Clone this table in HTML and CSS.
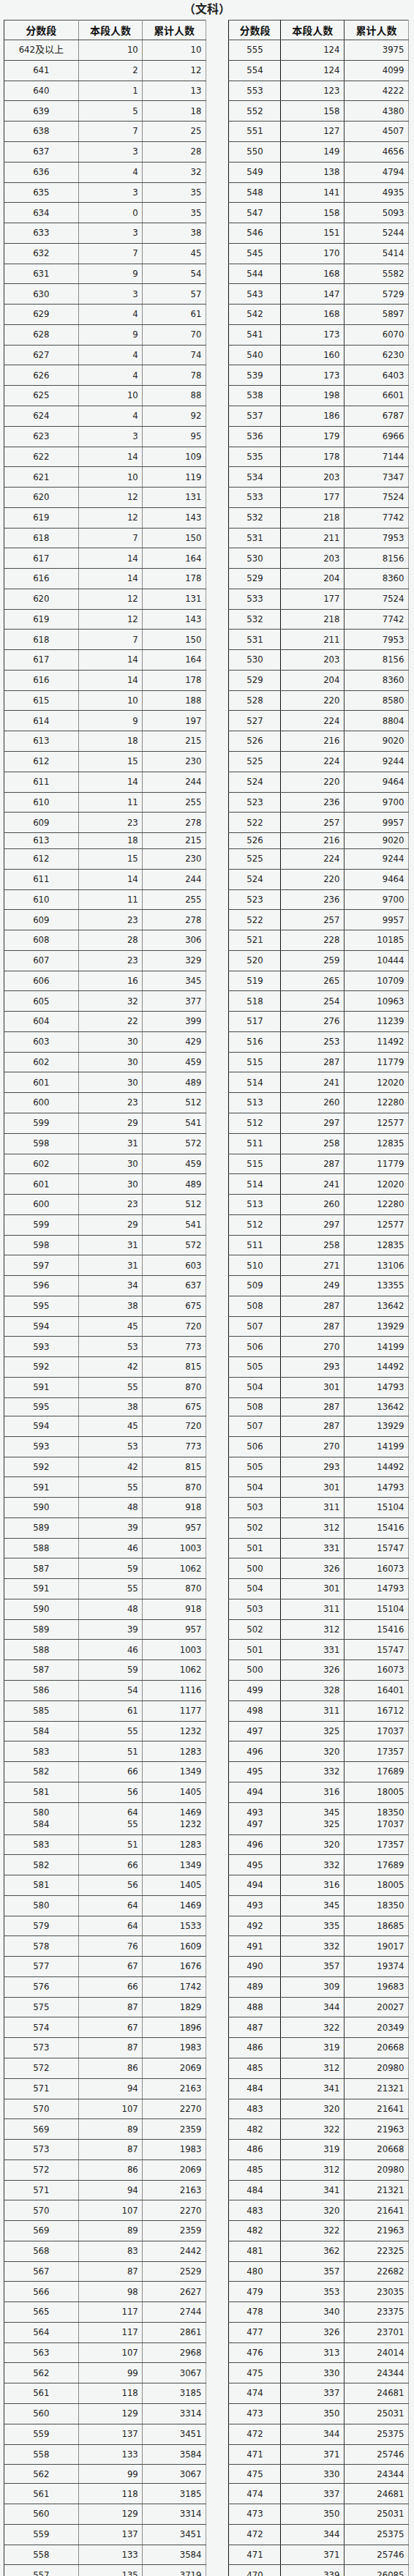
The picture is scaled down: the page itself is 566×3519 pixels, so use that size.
FILE: index.html
```html
<!DOCTYPE html>
<html lang="zh-CN">
<head>
<meta charset="utf-8">
<title>分数段统计（文科）</title>
<link rel="stylesheet" href="styles.css">
</head>
<body>
<div class="title">（文科）</div>
<div class="tables">
<table class="tbl left">
<colgroup><col class="l1"><col class="l2"><col class="l3"></colgroup>
<thead><tr><th>分数段</th><th>本段人数</th><th>累计人数</th></tr></thead>
<tbody>
<tr><td>642及以上</td><td>10</td><td>10</td></tr>
<tr><td>641</td><td>2</td><td>12</td></tr>
<tr><td>640</td><td>1</td><td>13</td></tr>
<tr><td>639</td><td>5</td><td>18</td></tr>
<tr><td>638</td><td>7</td><td>25</td></tr>
<tr><td>637</td><td>3</td><td>28</td></tr>
<tr><td>636</td><td>4</td><td>32</td></tr>
<tr><td>635</td><td>3</td><td>35</td></tr>
<tr><td>634</td><td>0</td><td>35</td></tr>
<tr><td>633</td><td>3</td><td>38</td></tr>
<tr><td>632</td><td>7</td><td>45</td></tr>
<tr><td>631</td><td>9</td><td>54</td></tr>
<tr><td>630</td><td>3</td><td>57</td></tr>
<tr><td>629</td><td>4</td><td>61</td></tr>
<tr><td>628</td><td>9</td><td>70</td></tr>
<tr><td>627</td><td>4</td><td>74</td></tr>
<tr><td>626</td><td>4</td><td>78</td></tr>
<tr><td>625</td><td>10</td><td>88</td></tr>
<tr><td>624</td><td>4</td><td>92</td></tr>
<tr><td>623</td><td>3</td><td>95</td></tr>
<tr><td>622</td><td>14</td><td>109</td></tr>
<tr><td>621</td><td>10</td><td>119</td></tr>
<tr><td>620</td><td>12</td><td>131</td></tr>
<tr><td>619</td><td>12</td><td>143</td></tr>
<tr><td>618</td><td>7</td><td>150</td></tr>
<tr><td>617</td><td>14</td><td>164</td></tr>
<tr><td>616</td><td>14</td><td>178</td></tr>
<tr><td>620</td><td>12</td><td>131</td></tr>
<tr><td>619</td><td>12</td><td>143</td></tr>
<tr><td>618</td><td>7</td><td>150</td></tr>
<tr><td>617</td><td>14</td><td>164</td></tr>
<tr><td>616</td><td>14</td><td>178</td></tr>
<tr><td>615</td><td>10</td><td>188</td></tr>
<tr><td>614</td><td>9</td><td>197</td></tr>
<tr><td>613</td><td>18</td><td>215</td></tr>
<tr><td>612</td><td>15</td><td>230</td></tr>
<tr><td>611</td><td>14</td><td>244</td></tr>
<tr><td>610</td><td>11</td><td>255</td></tr>
<tr><td>609</td><td>23</td><td>278</td></tr>
<tr class="short1"><td>613</td><td>18</td><td>215</td></tr>
<tr><td>612</td><td>15</td><td>230</td></tr>
<tr><td>611</td><td>14</td><td>244</td></tr>
<tr><td>610</td><td>11</td><td>255</td></tr>
<tr><td>609</td><td>23</td><td>278</td></tr>
<tr><td>608</td><td>28</td><td>306</td></tr>
<tr><td>607</td><td>23</td><td>329</td></tr>
<tr><td>606</td><td>16</td><td>345</td></tr>
<tr><td>605</td><td>32</td><td>377</td></tr>
<tr><td>604</td><td>22</td><td>399</td></tr>
<tr><td>603</td><td>30</td><td>429</td></tr>
<tr><td>602</td><td>30</td><td>459</td></tr>
<tr><td>601</td><td>30</td><td>489</td></tr>
<tr><td>600</td><td>23</td><td>512</td></tr>
<tr><td>599</td><td>29</td><td>541</td></tr>
<tr><td>598</td><td>31</td><td>572</td></tr>
<tr><td>602</td><td>30</td><td>459</td></tr>
<tr><td>601</td><td>30</td><td>489</td></tr>
<tr><td>600</td><td>23</td><td>512</td></tr>
<tr><td>599</td><td>29</td><td>541</td></tr>
<tr><td>598</td><td>31</td><td>572</td></tr>
<tr><td>597</td><td>31</td><td>603</td></tr>
<tr><td>596</td><td>34</td><td>637</td></tr>
<tr><td>595</td><td>38</td><td>675</td></tr>
<tr><td>594</td><td>45</td><td>720</td></tr>
<tr><td>593</td><td>53</td><td>773</td></tr>
<tr><td>592</td><td>42</td><td>815</td></tr>
<tr><td>591</td><td>55</td><td>870</td></tr>
<tr class="short2"><td>595</td><td>38</td><td>675</td></tr>
<tr><td>594</td><td>45</td><td>720</td></tr>
<tr><td>593</td><td>53</td><td>773</td></tr>
<tr><td>592</td><td>42</td><td>815</td></tr>
<tr><td>591</td><td>55</td><td>870</td></tr>
<tr><td>590</td><td>48</td><td>918</td></tr>
<tr><td>589</td><td>39</td><td>957</td></tr>
<tr><td>588</td><td>46</td><td>1003</td></tr>
<tr><td>587</td><td>59</td><td>1062</td></tr>
<tr><td>591</td><td>55</td><td>870</td></tr>
<tr><td>590</td><td>48</td><td>918</td></tr>
<tr><td>589</td><td>39</td><td>957</td></tr>
<tr><td>588</td><td>46</td><td>1003</td></tr>
<tr><td>587</td><td>59</td><td>1062</td></tr>
<tr><td>586</td><td>54</td><td>1116</td></tr>
<tr><td>585</td><td>61</td><td>1177</td></tr>
<tr><td>584</td><td>55</td><td>1232</td></tr>
<tr><td>583</td><td>51</td><td>1283</td></tr>
<tr><td>582</td><td>66</td><td>1349</td></tr>
<tr><td>581</td><td>56</td><td>1405</td></tr>
<tr class="double"><td>580<br>584</td><td>64<br>55</td><td>1469<br>1232</td></tr>
<tr><td>583</td><td>51</td><td>1283</td></tr>
<tr><td>582</td><td>66</td><td>1349</td></tr>
<tr><td>581</td><td>56</td><td>1405</td></tr>
<tr><td>580</td><td>64</td><td>1469</td></tr>
<tr><td>579</td><td>64</td><td>1533</td></tr>
<tr><td>578</td><td>76</td><td>1609</td></tr>
<tr><td>577</td><td>67</td><td>1676</td></tr>
<tr><td>576</td><td>66</td><td>1742</td></tr>
<tr><td>575</td><td>87</td><td>1829</td></tr>
<tr><td>574</td><td>67</td><td>1896</td></tr>
<tr><td>573</td><td>87</td><td>1983</td></tr>
<tr><td>572</td><td>86</td><td>2069</td></tr>
<tr><td>571</td><td>94</td><td>2163</td></tr>
<tr><td>570</td><td>107</td><td>2270</td></tr>
<tr><td>569</td><td>89</td><td>2359</td></tr>
<tr><td>573</td><td>87</td><td>1983</td></tr>
<tr><td>572</td><td>86</td><td>2069</td></tr>
<tr><td>571</td><td>94</td><td>2163</td></tr>
<tr><td>570</td><td>107</td><td>2270</td></tr>
<tr><td>569</td><td>89</td><td>2359</td></tr>
<tr><td>568</td><td>83</td><td>2442</td></tr>
<tr><td>567</td><td>87</td><td>2529</td></tr>
<tr><td>566</td><td>98</td><td>2627</td></tr>
<tr><td>565</td><td>117</td><td>2744</td></tr>
<tr><td>564</td><td>117</td><td>2861</td></tr>
<tr><td>563</td><td>107</td><td>2968</td></tr>
<tr><td>562</td><td>99</td><td>3067</td></tr>
<tr><td>561</td><td>118</td><td>3185</td></tr>
<tr><td>560</td><td>129</td><td>3314</td></tr>
<tr><td>559</td><td>137</td><td>3451</td></tr>
<tr><td>558</td><td>133</td><td>3584</td></tr>
<tr class="short3"><td>562</td><td>99</td><td>3067</td></tr>
<tr><td>561</td><td>118</td><td>3185</td></tr>
<tr><td>560</td><td>129</td><td>3314</td></tr>
<tr><td>559</td><td>137</td><td>3451</td></tr>
<tr><td>558</td><td>133</td><td>3584</td></tr>
<tr><td>557</td><td>135</td><td>3719</td></tr>
</tbody>
</table>
<table class="tbl right">
<colgroup><col class="r1"><col class="r2"><col class="r3"></colgroup>
<thead><tr><th>分数段</th><th>本段人数</th><th>累计人数</th></tr></thead>
<tbody>
<tr><td>555</td><td>124</td><td>3975</td></tr>
<tr><td>554</td><td>124</td><td>4099</td></tr>
<tr><td>553</td><td>123</td><td>4222</td></tr>
<tr><td>552</td><td>158</td><td>4380</td></tr>
<tr><td>551</td><td>127</td><td>4507</td></tr>
<tr><td>550</td><td>149</td><td>4656</td></tr>
<tr><td>549</td><td>138</td><td>4794</td></tr>
<tr><td>548</td><td>141</td><td>4935</td></tr>
<tr><td>547</td><td>158</td><td>5093</td></tr>
<tr><td>546</td><td>151</td><td>5244</td></tr>
<tr><td>545</td><td>170</td><td>5414</td></tr>
<tr><td>544</td><td>168</td><td>5582</td></tr>
<tr><td>543</td><td>147</td><td>5729</td></tr>
<tr><td>542</td><td>168</td><td>5897</td></tr>
<tr><td>541</td><td>173</td><td>6070</td></tr>
<tr><td>540</td><td>160</td><td>6230</td></tr>
<tr><td>539</td><td>173</td><td>6403</td></tr>
<tr><td>538</td><td>198</td><td>6601</td></tr>
<tr><td>537</td><td>186</td><td>6787</td></tr>
<tr><td>536</td><td>179</td><td>6966</td></tr>
<tr><td>535</td><td>178</td><td>7144</td></tr>
<tr><td>534</td><td>203</td><td>7347</td></tr>
<tr><td>533</td><td>177</td><td>7524</td></tr>
<tr><td>532</td><td>218</td><td>7742</td></tr>
<tr><td>531</td><td>211</td><td>7953</td></tr>
<tr><td>530</td><td>203</td><td>8156</td></tr>
<tr><td>529</td><td>204</td><td>8360</td></tr>
<tr><td>533</td><td>177</td><td>7524</td></tr>
<tr><td>532</td><td>218</td><td>7742</td></tr>
<tr><td>531</td><td>211</td><td>7953</td></tr>
<tr><td>530</td><td>203</td><td>8156</td></tr>
<tr><td>529</td><td>204</td><td>8360</td></tr>
<tr><td>528</td><td>220</td><td>8580</td></tr>
<tr><td>527</td><td>224</td><td>8804</td></tr>
<tr><td>526</td><td>216</td><td>9020</td></tr>
<tr><td>525</td><td>224</td><td>9244</td></tr>
<tr><td>524</td><td>220</td><td>9464</td></tr>
<tr><td>523</td><td>236</td><td>9700</td></tr>
<tr><td>522</td><td>257</td><td>9957</td></tr>
<tr class="short1"><td>526</td><td>216</td><td>9020</td></tr>
<tr><td>525</td><td>224</td><td>9244</td></tr>
<tr><td>524</td><td>220</td><td>9464</td></tr>
<tr><td>523</td><td>236</td><td>9700</td></tr>
<tr><td>522</td><td>257</td><td>9957</td></tr>
<tr><td>521</td><td>228</td><td>10185</td></tr>
<tr><td>520</td><td>259</td><td>10444</td></tr>
<tr><td>519</td><td>265</td><td>10709</td></tr>
<tr><td>518</td><td>254</td><td>10963</td></tr>
<tr><td>517</td><td>276</td><td>11239</td></tr>
<tr><td>516</td><td>253</td><td>11492</td></tr>
<tr><td>515</td><td>287</td><td>11779</td></tr>
<tr><td>514</td><td>241</td><td>12020</td></tr>
<tr><td>513</td><td>260</td><td>12280</td></tr>
<tr><td>512</td><td>297</td><td>12577</td></tr>
<tr><td>511</td><td>258</td><td>12835</td></tr>
<tr><td>515</td><td>287</td><td>11779</td></tr>
<tr><td>514</td><td>241</td><td>12020</td></tr>
<tr><td>513</td><td>260</td><td>12280</td></tr>
<tr><td>512</td><td>297</td><td>12577</td></tr>
<tr><td>511</td><td>258</td><td>12835</td></tr>
<tr><td>510</td><td>271</td><td>13106</td></tr>
<tr><td>509</td><td>249</td><td>13355</td></tr>
<tr><td>508</td><td>287</td><td>13642</td></tr>
<tr><td>507</td><td>287</td><td>13929</td></tr>
<tr><td>506</td><td>270</td><td>14199</td></tr>
<tr><td>505</td><td>293</td><td>14492</td></tr>
<tr><td>504</td><td>301</td><td>14793</td></tr>
<tr class="short2"><td>508</td><td>287</td><td>13642</td></tr>
<tr><td>507</td><td>287</td><td>13929</td></tr>
<tr><td>506</td><td>270</td><td>14199</td></tr>
<tr><td>505</td><td>293</td><td>14492</td></tr>
<tr><td>504</td><td>301</td><td>14793</td></tr>
<tr><td>503</td><td>311</td><td>15104</td></tr>
<tr><td>502</td><td>312</td><td>15416</td></tr>
<tr><td>501</td><td>331</td><td>15747</td></tr>
<tr><td>500</td><td>326</td><td>16073</td></tr>
<tr><td>504</td><td>301</td><td>14793</td></tr>
<tr><td>503</td><td>311</td><td>15104</td></tr>
<tr><td>502</td><td>312</td><td>15416</td></tr>
<tr><td>501</td><td>331</td><td>15747</td></tr>
<tr><td>500</td><td>326</td><td>16073</td></tr>
<tr><td>499</td><td>328</td><td>16401</td></tr>
<tr><td>498</td><td>311</td><td>16712</td></tr>
<tr><td>497</td><td>325</td><td>17037</td></tr>
<tr><td>496</td><td>320</td><td>17357</td></tr>
<tr><td>495</td><td>332</td><td>17689</td></tr>
<tr><td>494</td><td>316</td><td>18005</td></tr>
<tr class="double"><td>493<br>497</td><td>345<br>325</td><td>18350<br>17037</td></tr>
<tr><td>496</td><td>320</td><td>17357</td></tr>
<tr><td>495</td><td>332</td><td>17689</td></tr>
<tr><td>494</td><td>316</td><td>18005</td></tr>
<tr><td>493</td><td>345</td><td>18350</td></tr>
<tr><td>492</td><td>335</td><td>18685</td></tr>
<tr><td>491</td><td>332</td><td>19017</td></tr>
<tr><td>490</td><td>357</td><td>19374</td></tr>
<tr><td>489</td><td>309</td><td>19683</td></tr>
<tr><td>488</td><td>344</td><td>20027</td></tr>
<tr><td>487</td><td>322</td><td>20349</td></tr>
<tr><td>486</td><td>319</td><td>20668</td></tr>
<tr><td>485</td><td>312</td><td>20980</td></tr>
<tr><td>484</td><td>341</td><td>21321</td></tr>
<tr><td>483</td><td>320</td><td>21641</td></tr>
<tr><td>482</td><td>322</td><td>21963</td></tr>
<tr><td>486</td><td>319</td><td>20668</td></tr>
<tr><td>485</td><td>312</td><td>20980</td></tr>
<tr><td>484</td><td>341</td><td>21321</td></tr>
<tr><td>483</td><td>320</td><td>21641</td></tr>
<tr><td>482</td><td>322</td><td>21963</td></tr>
<tr><td>481</td><td>362</td><td>22325</td></tr>
<tr><td>480</td><td>357</td><td>22682</td></tr>
<tr><td>479</td><td>353</td><td>23035</td></tr>
<tr><td>478</td><td>340</td><td>23375</td></tr>
<tr><td>477</td><td>326</td><td>23701</td></tr>
<tr><td>476</td><td>313</td><td>24014</td></tr>
<tr><td>475</td><td>330</td><td>24344</td></tr>
<tr><td>474</td><td>337</td><td>24681</td></tr>
<tr><td>473</td><td>350</td><td>25031</td></tr>
<tr><td>472</td><td>344</td><td>25375</td></tr>
<tr><td>471</td><td>371</td><td>25746</td></tr>
<tr class="short3"><td>475</td><td>330</td><td>24344</td></tr>
<tr><td>474</td><td>337</td><td>24681</td></tr>
<tr><td>473</td><td>350</td><td>25031</td></tr>
<tr><td>472</td><td>344</td><td>25375</td></tr>
<tr><td>471</td><td>371</td><td>25746</td></tr>
<tr><td>470</td><td>339</td><td>26085</td></tr>
</tbody>
</table>
</div>
</body>
</html>
```
FILE: styles.css
```css
html, body {
  margin: 0;
  padding: 0;
  background: #f4f6f6;
}

body {
  font-family: "DejaVu Sans Condensed", "DejaVu Sans", "Noto Sans CJK SC", sans-serif;
  color: #222;
}

.title {
  height: 26.5px;
  line-height: 22px;
  text-align: center;
  font-family: "Noto Sans CJK SC", sans-serif;
  font-weight: bold;
  font-size: 16px;
  color: #222;
}

.tables {
  display: flex;
  align-items: flex-start;
  padding-left: 5px;
  gap: 30.5px;
}

.tbl {
  border-collapse: collapse;
  table-layout: fixed;
  flex: none;
}

.left { width: 276px; }
.right { width: 245.5px; }

.l1 { width: 101.7px; }
.l2 { width: 87.6px; }
.l3 { width: 86.7px; }
.r1 { width: 71px; }
.r2 { width: 86.5px; }
.r3 { width: 88px; }

.tbl tr { height: 27.78px; }
.tbl thead tr { height: 27.7px; }
.tbl tr.short1 { height: 22px; }
.tbl tr.short2 { height: 25.3px; }
.tbl tr.short3 { height: 26px; }
.tbl tr.double { height: 44px; }

.tbl th,
.tbl td {
  border: 1px solid #4a4a4a;
  padding: 0 5.5px;
  line-height: 16.3px;
  font-size: 13px;
  vertical-align: middle;
  white-space: nowrap;
}

.tbl th {
  font-family: "Noto Sans CJK SC", sans-serif;
  font-weight: bold;
  font-size: 14px;
  color: #111;
  text-align: center;
}

.tbl td { text-align: right; }
.tbl td:first-child { text-align: center; }

.left th:first-child,
.left td:first-child { border-left-color: #333; border-right-color: #8a8a8a; }
.left th:nth-child(2),
.left td:nth-child(2) { border-right-color: #8a8a8a; }
.left th:nth-child(3),
.left td:nth-child(3) { border-right-color: #999; }

.right th:first-child,
.right td:first-child { border-left-color: #111; border-right-color: #111; }
.right th:nth-child(2),
.right td:nth-child(2) { border-right-color: #333; }
.right th:nth-child(3),
.right td:nth-child(3) { border-right-color: #999; }
```
